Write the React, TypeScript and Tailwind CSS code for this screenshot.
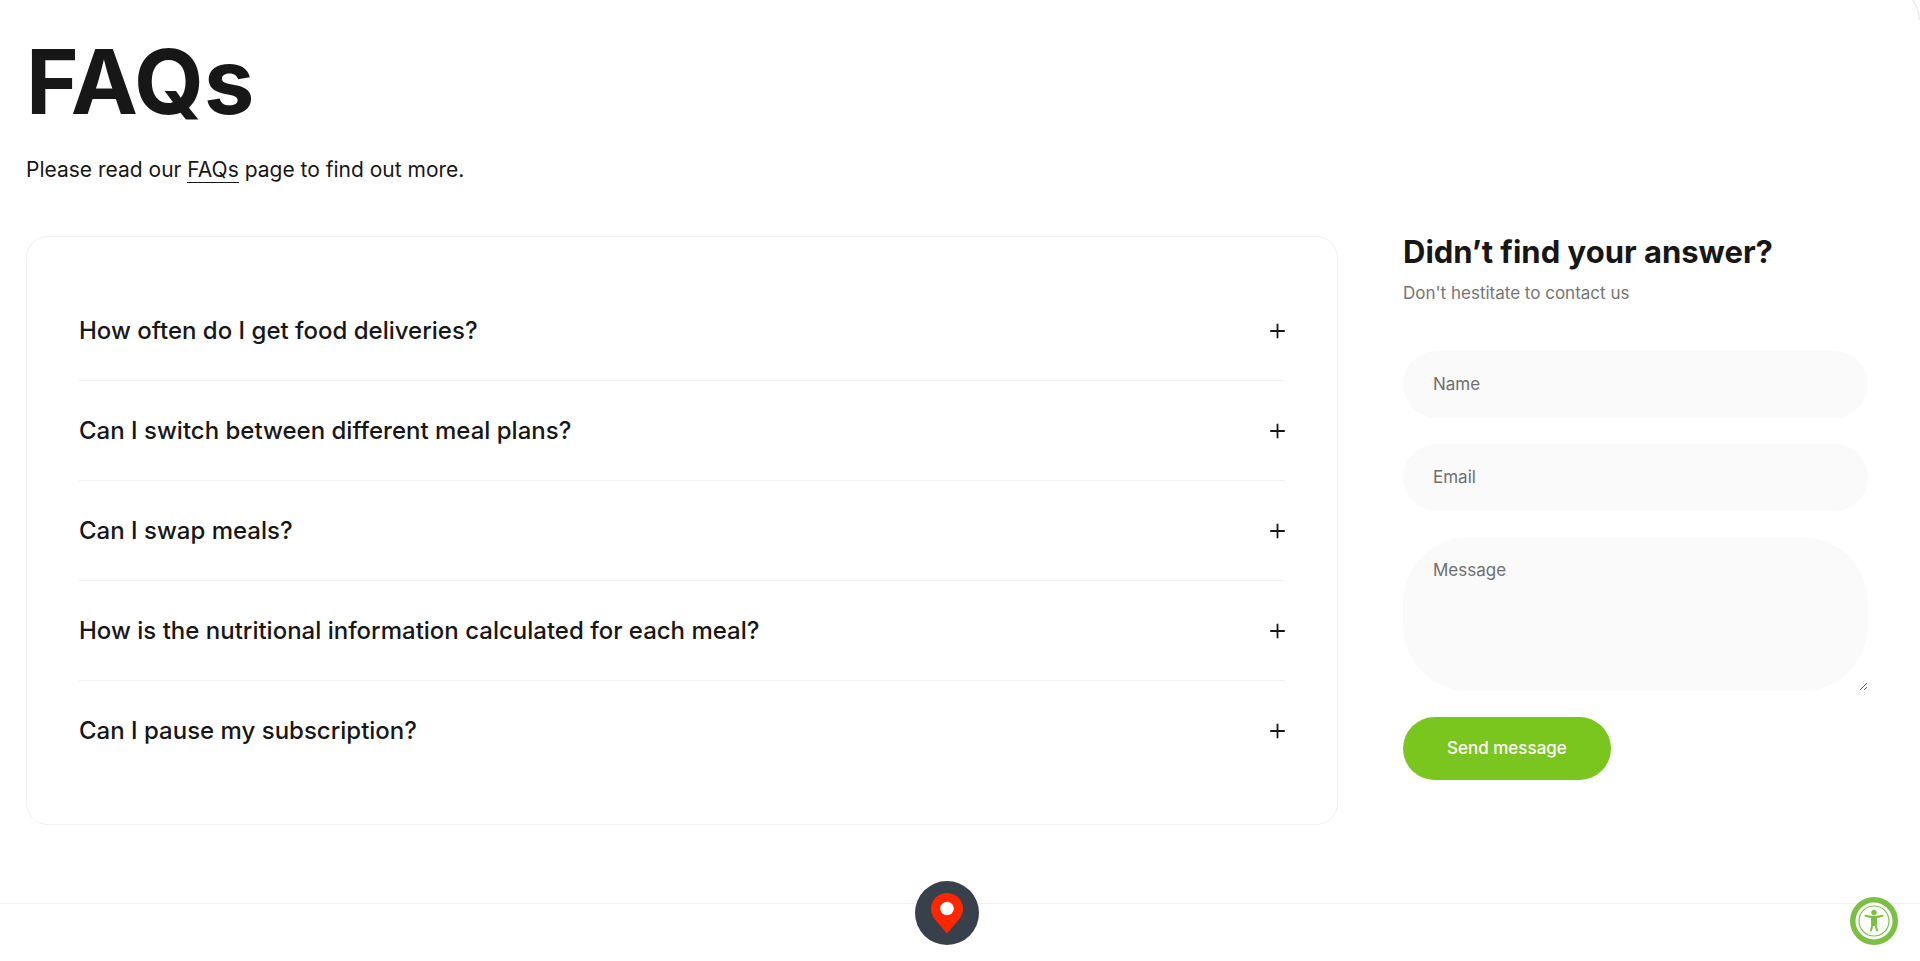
import { useState } from 'react';

const questions = [
  {
    title: 'How often do I get food deliveries?',
    answer: 'Meals are delivered fresh throughout the week.',
  },
  {
    title: 'Can I switch between different meal plans?',
    answer: 'Yes, you can change your plan from your account.',
  },
  {
    title: 'Can I swap meals?',
    answer: 'Yes, meals can be swapped before the weekly cut-off.',
  },
  {
    title: 'How is the nutritional information calculated for each meal?',
    answer: 'Every recipe is weighed and calculated per ingredient.',
  },
  {
    title: 'Can I pause my subscription?',
    answer: 'Yes, you can pause and resume at any time.',
  },
];

function PlusIcon() {
  return (
    <svg className="size-4 shrink-0" viewBox="0 0 16 16" fill="none" stroke="currentColor" strokeWidth="1.8">
      <path d="M8.500 .8v14.400M1.200 8h14.600" />
    </svg>
  );
}

function PinIcon() {
  return (
    <svg className="size-16" viewBox="0 0 64 64">
      <circle cx="32" cy="32" r="32" fill="#37404b" />
      <path
        d="M32 12c-8.9 0-16 7-16 15.700 0 4.300 1.700 7.900 4.400 11.300L32 52.500 43.600 39c2.700-3.400 4.400-7 4.400-11.300C48 19 40.900 12 32 12Z"
        fill="#ff2600"
      />
      <circle cx="32" cy="27.500" r="6.800" fill="#fff" />
    </svg>
  );
}

function AccessibilityIcon() {
  return (
    <svg className="size-12" viewBox="0 0 48 48">
      <circle cx="24" cy="24" r="24" fill="#7ac143" />
      <circle cx="24" cy="24" r="18.500" fill="#fff" />
      <circle cx="24" cy="24" r="15" fill="none" stroke="#7ac143" strokeWidth="1.200" />
      <circle cx="24" cy="15.500" r="2.700" fill="#7ac143" />
      <path
        d="M15.500 18.700 22 20.200h4l6.500-1.500M22 20.200h4v7.800h-4zM22.600 27l-1.600 6.600M25.400 27l1.600 6.600"
        fill="#7ac143"
        stroke="#7ac143"
        strokeWidth="2"
        strokeLinecap="round"
        strokeLinejoin="round"
      />
    </svg>
  );
}

function FaqList() {
  const [open, setOpen] = useState<number | null>(null);

  return (
    <div className="rounded-[22px] border border-[#f0f0f0] px-[52px] py-11">
      <ul className="divide-y divide-[#f0f0f0]">
        {questions.map((question, index) => (
          <li key={question.title}>
            <button
              type="button"
              aria-expanded={open === index}
              onClick={() => setOpen(open === index ? null : index)}
              className="flex w-full cursor-pointer items-center justify-between gap-6 py-[34px] text-left text-2xl leading-[31px] font-medium"
            >
              {question.title}
              <PlusIcon />
            </button>
            {open === index && <p className="pb-8 text-lg text-[#6f6f6f]">{question.answer}</p>}
          </li>
        ))}
      </ul>
    </div>
  );
}

const fieldClass =
  'block w-full bg-[#fafafa] px-[30px] py-5 text-[17px] leading-[27px] outline-none placeholder:text-[#6f6f6f] placeholder:opacity-100';

function ContactForm() {
  return (
    <div>
      <h2 className="text-[31px] leading-8 font-bold">Didn’t find your answer?</h2>
      <p className="mt-3 text-[17px] leading-[27px] text-[#757575]">Don't hestitate to contact us</p>
      <form className="mt-11 flex flex-col items-start gap-[26px]" onSubmit={(e) => e.preventDefault()}>
        <input type="text" name="name" aria-label="Name" placeholder="Name" className={`${fieldClass} rounded-full`} />
        <input type="email" name="email" aria-label="Email" placeholder="Email" className={`${fieldClass} rounded-full`} />
        <textarea
          name="message"
          aria-label="Message"
          placeholder="Message"
          className={`${fieldClass} h-[154px] resize-y rounded-[66px]`}
        />
        <button
          type="submit"
          className="cursor-pointer rounded-full bg-[#7ac61f] px-11 py-[18px] text-[17px] leading-[27px] font-medium text-white"
        >
          Send message
        </button>
      </form>
    </div>
  );
}

export default function App() {
  return (
    <div className="relative min-h-screen overflow-hidden bg-white font-['Inter',sans-serif] text-[#171717]">
      <svg className="absolute top-0 right-0 h-5 w-2" viewBox="0 0 8 20" fill="none" stroke="#ececec" strokeWidth="1.500">
        <path d="M0-.5C4.500 5 7.200 12 7.200 20" />
      </svg>

      <main className="pt-9 pr-[52px] pb-[78px] pl-[26px]">
        <h1 className="text-[90px] leading-[92px] font-bold">FAQs</h1>
        <p className="mt-6 text-[21px] leading-9">
          Please read our{' '}
          <a href="#faqs" className="border-b border-[#171717]">
            FAQs
          </a>{' '}
          page to find out more.
        </p>
        <div className="mt-12 grid grid-cols-[minmax(0,1fr)_465px] gap-[65px]">
          <FaqList />
          <ContactForm />
        </div>
      </main>

      <footer className="border-t border-[#f0f0f0]" />

      <button
        type="button"
        aria-label="Location"
        className="absolute bottom-4 left-[calc(50%-45px)] cursor-pointer"
      >
        <PinIcon />
      </button>
      <button type="button" aria-label="Accessibility" className="absolute right-[22px] bottom-4 cursor-pointer">
        <AccessibilityIcon />
      </button>
    </div>
  );
}
